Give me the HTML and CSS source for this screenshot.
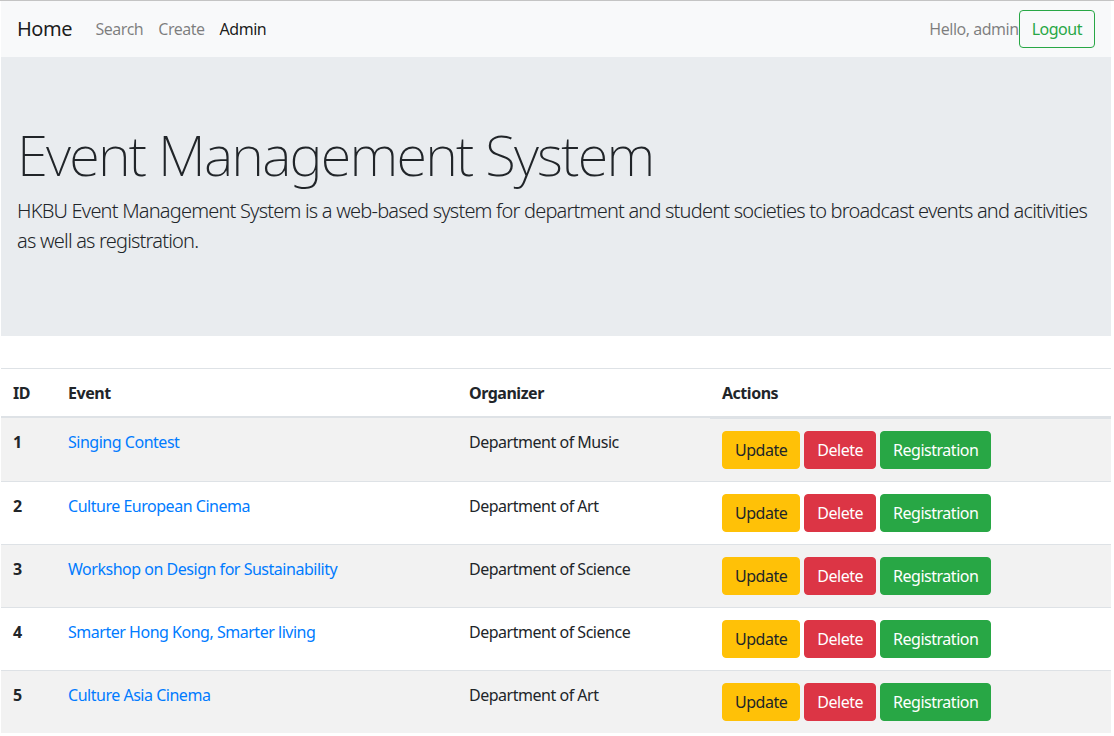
FILE: index.html
```html
<!DOCTYPE html>
<html lang="en">
<head>
<meta charset="utf-8">
<title>Event Management System</title>
<link rel="stylesheet" href="styles.css">
</head>
<body>
<div class="page">
  <nav class="navbar">
    <a class="brand" href="#">Home</a>
    <ul class="nav">
      <li><a class="nav-link" href="#">Search</a></li>
      <li><a class="nav-link" href="#">Create</a></li>
      <li><a class="nav-link active" href="#">Admin</a></li>
    </ul>
    <div class="user">
      <span class="hello">Hello, admin</span>
      <a class="btn btn-outline-success" href="#">Logout</a>
    </div>
  </nav>

  <section class="jumbotron">
    <h1 class="display">Event Management System</h1>
    <p class="lead">HKBU Event Management System is a web-based system for department and student societies to broadcast events and acitivities as well as registration.</p>
  </section>

  <table class="table">
    <thead>
      <tr>
        <th class="col-id">ID</th>
        <th class="col-event">Event</th>
        <th class="col-org">Organizer</th>
        <th class="col-act">Actions</th>
      </tr>
    </thead>
    <tbody>
      <tr>
        <th>1</th>
        <td><a href="#">Singing Contest</a></td>
        <td>Department of Music</td>
        <td class="actions"><a class="btn btn-warning" href="#">Update</a><a class="btn btn-danger" href="#">Delete</a><a class="btn btn-success" href="#">Registration</a></td>
      </tr>
      <tr>
        <th>2</th>
        <td><a href="#">Culture European Cinema</a></td>
        <td>Department of Art</td>
        <td class="actions"><a class="btn btn-warning" href="#">Update</a><a class="btn btn-danger" href="#">Delete</a><a class="btn btn-success" href="#">Registration</a></td>
      </tr>
      <tr>
        <th>3</th>
        <td><a href="#">Workshop on Design for Sustainability</a></td>
        <td>Department of Science</td>
        <td class="actions"><a class="btn btn-warning" href="#">Update</a><a class="btn btn-danger" href="#">Delete</a><a class="btn btn-success" href="#">Registration</a></td>
      </tr>
      <tr>
        <th>4</th>
        <td><a href="#">Smarter Hong Kong, Smarter living</a></td>
        <td>Department of Science</td>
        <td class="actions"><a class="btn btn-warning" href="#">Update</a><a class="btn btn-danger" href="#">Delete</a><a class="btn btn-success" href="#">Registration</a></td>
      </tr>
      <tr>
        <th>5</th>
        <td><a href="#">Culture Asia Cinema</a></td>
        <td>Department of Art</td>
        <td class="actions"><a class="btn btn-warning" href="#">Update</a><a class="btn btn-danger" href="#">Delete</a><a class="btn btn-success" href="#">Registration</a></td>
      </tr>
    </tbody>
  </table>
</div>
</body>
</html>
```
FILE: styles.css
```css
* { box-sizing: border-box; }

html, body {
  margin: 0;
  padding: 0;
  background: #fff;
}

body {
  font-family: "Noto Sans", "Open Sans", sans-serif;
  font-size: 16px;
  line-height: 1.5;
  letter-spacing: -0.03em;
  color: #212529;
  border-top: 1px solid #c4c4c4;
}

.page {
  width: 1110px;
  margin-left: 1px;
}

a { text-decoration: none; }

/* navbar */
.navbar {
  display: flex;
  align-items: center;
  height: 56px;
  padding: 8px 16px;
  background: #f8f9fa;
}

.brand {
  font-size: 20px;
  line-height: 30px;
  color: rgba(0, 0, 0, 0.9);
  margin-right: 16px;
  padding: 5px 0;
}

.nav {
  display: flex;
  list-style: none;
  margin: 0;
  padding: 0;
}

.nav-link {
  display: block;
  padding: 8px 7.5px;
  color: rgba(0, 0, 0, 0.5);
}

.nav-link.active { color: rgba(0, 0, 0, 0.9); }

.user {
  margin-left: auto;
  display: flex;
  align-items: center;
}

.hello { color: rgba(0, 0, 0, 0.5); }

/* jumbotron */
.jumbotron {
  background: #e9ecef;
  padding: 64px 16px;
  margin-bottom: 32px;
}

.display {
  margin: 0 0 8px;
  font-size: 56px;
  font-weight: 200;
  line-height: 1.2;
  letter-spacing: -0.032em;
}

.lead {
  margin: 0 0 16px;
  font-size: 20px;
  font-weight: 300;
  line-height: 1.5;
  letter-spacing: -0.04em;
}

/* table */
.table {
  width: 1110px;
  border-collapse: collapse;
  color: #212529;
}

.table th,
.table td {
  padding: 12px;
  text-align: left;
  vertical-align: top;
  border-top: 1px solid #dee2e6;
}

.table thead th {
  vertical-align: bottom;
  padding-bottom: 11px;
  border-bottom: 2px solid #dee2e6;
  font-weight: 700;
}

.table tbody th { font-weight: 700; }

.table tbody tr:nth-child(odd) { background: rgba(0, 0, 0, 0.05); }

.table a:not(.btn) { color: #007bff; }

.col-id { width: 55px; }
.col-event { width: 401px; }
.col-org { width: 253px; }

.actions {
  display: flex;
  gap: 4px;
}

.btn {
  display: inline-block;
  padding: 6px 12px;
  font-size: 16px;
  line-height: 24px;
  border: 1px solid transparent;
  border-radius: 4px;
  text-align: center;
}

.btn-outline-success {
  color: #28a745;
  border-color: #28a745;
}

.btn-warning {
  color: #212529;
  background: #ffc107;
  border-color: #ffc107;
}

.btn-danger {
  color: #fff;
  background: #dc3545;
  border-color: #dc3545;
}

.btn-success {
  color: #fff;
  background: #28a745;
  border-color: #28a745;
}
```
